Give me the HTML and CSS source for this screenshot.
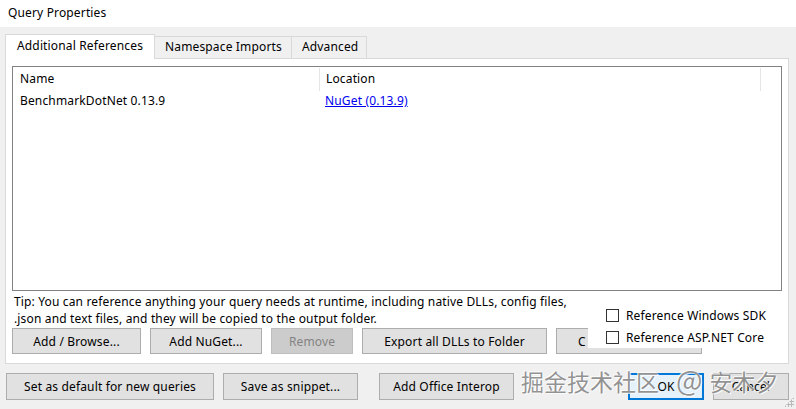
FILE: index.html
```html
<!DOCTYPE html>
<html>
<head>
<meta charset="utf-8">
<link rel="stylesheet" href="styles.css">
</head>
<body>
<div class="window">
  <div class="titlebar">Query Properties</div>
  <div class="dialog">
    <div class="tabs">
      <div class="tab active">Additional References</div>
      <div class="tab">Namespace Imports</div>
      <div class="tab">Advanced</div>
    </div>
    <div class="panel">
      <div class="list">
        <div class="list-head">
          <div class="col col-name">Name</div>
          <div class="col col-loc">Location</div>
          <div class="col col-rest"></div>
        </div>
        <div class="list-row">
          <div class="col col-name">BenchmarkDotNet 0.13.9</div>
          <div class="col col-loc"><a class="link">NuGet (0.13.9)</a></div>
        </div>
      </div>
      <div class="tip">Tip: You can reference anything your query needs at runtime, including native DLLs, config files,<br>.json and text files, and they will be copied to the output folder.</div>
      <div class="btnrow">
        <button class="btn w-add">Add / Browse...</button>
        <button class="btn w-nuget">Add NuGet...</button>
        <button class="btn w-remove disabled">Remove</button>
        <button class="btn w-export">Export all DLLs to Folder</button>
        <button class="btn w-c">C</button>
      </div>
      <div class="checks">
        <label class="check"><span class="box"></span>Reference Windows SDK</label>
        <label class="check"><span class="box"></span>Reference ASP.NET Core</label>
      </div>
    </div>
    <div class="bottomrow">
      <button class="btn w-default">Set as default for new queries</button>
      <button class="btn w-snippet">Save as snippet...</button>
      <button class="btn w-office">Add Office Interop</button>
      <div class="spacer"></div>
      <button class="btn w-ok focused">OK</button>
      <button class="btn w-cancel">Cancel</button>
    </div>
  </div>
  <div class="watermark">掘金技术社区<span class="at">@</span>安木夕</div>
  <div class="grip"></div>
</div>
</body>
</html>
```

FILE: styles.css
```css
* { box-sizing: border-box; }
html, body { margin: 0; padding: 0; }
body {
  width: 796px;
  height: 409px;
  overflow: hidden;
  background: #f0f0f0;
  font-family: "Noto Sans", "Noto Sans CJK SC", sans-serif;
  font-size: 12px;
  letter-spacing: 0.15px;
  color: #000;
}
.window {
  position: relative;
  width: 796px;
  height: 409px;
}
.titlebar {
  height: 27px;
  background: #fff;
  padding-left: 8px;
  line-height: 25px;
  font-size: 12px;
}
.dialog {
  padding: 6px 7px 0 5px;
}
.tabs {
  display: flex;
  align-items: flex-end;
  height: 25px;
}
.tab {
  height: 22px;
  line-height: 20px;
  padding: 0 8px 0 10px;
  border: 1px solid #d9d9d9;
  border-bottom: none;
  border-left: none;
  background: #f0f0f0;
  white-space: nowrap;
}
.tab.active {
  height: 25px;
  line-height: 22px;
  border-left: 1px solid #d9d9d9;
  background: #fff;
  width: 150px;
  padding-left: 11px;
  position: relative;
  z-index: 1;
  margin-bottom: -1px;
}
.tab:nth-child(2) { width: 137px; }
.tab:nth-child(3) { width: 75px; }
.panel {
  position: relative;
  background: #fff;
  border: 1px solid #d9d9d9;
  height: 306px;
  padding: 7px 6px 0 6px;
}
.list {
  height: 225px;
  border: 1px solid #828282;
}
.list-head, .list-row {
  display: flex;
}
.list-head {
  height: 24px;
  padding-top: 1px;
}
.list-head .col {
  line-height: 22px;
}
.col-name {
  width: 306px;
  padding-left: 7px;
}
.col-loc {
  width: 441px;
  padding-left: 6px;
}
.list-head .col-loc {
  border-left: 1px solid #e5e5e5;
}
.list-head .col-rest {
  border-left: 1px solid #e5e5e5;
  flex: 1;
}
.list-row {
  height: 22px;
  line-height: 20px;
}
.link {
  color: #0000ee;
  text-decoration: underline;
}
.tip {
  padding: 2px 0 0 2px;
  line-height: 17px;
  height: 37px;
}
.btnrow {
  display: flex;
  gap: 9px;
}
.btn {
  font-family: inherit;
  font-size: 12px;
  letter-spacing: 0.15px;
  color: #000;
  height: 26px;
  background: #e1e1e1;
  border: 1px solid #adadad;
  padding: 0;
  margin: 0;
  text-align: center;
}
.btn.disabled {
  background: #cccccc;
  border-color: #bfbfbf;
  color: #838383;
}
.w-add { width: 129px; }
.w-nuget { width: 112px; }
.w-remove { width: 82px; }
.w-export { width: 185px; }
.w-c { width: 146px; text-align: left; padding-left: 21px; }
.checks {
  position: absolute;
  left: 582px;
  top: 245px;
  display: flex;
  flex-direction: column;
}
.check {
  display: flex;
  align-items: center;
  height: 23px;
  padding-left: 18px;
  font-size: 12px;
  white-space: nowrap;
}
.check:nth-child(2) {
  background: #fff;
  width: 115px;
  height: 21px;
}
.box {
  width: 13px;
  height: 13px;
  border: 1px solid #333;
  background: #fff;
  margin-right: 7px;
  flex: none;
}
.bottomrow {
  display: flex;
  gap: 9px;
  margin-top: 9px;
  margin-left: 1px;
}
.bottomrow .btn { height: 27px; }
.w-default { width: 208px; }
.w-snippet { width: 135px; }
.w-office { width: 135px; margin-left: 12px; }
.spacer { flex: 1; }
.w-ok { width: 76px; }
.w-cancel { width: 76px; }
.btn.focused {
  border: 2px solid #0078d7;
  background: #e5f1fb;
}
.watermark {
  position: absolute;
  left: 521px;
  top: 362px;
  font-family: "Noto Sans CJK SC", sans-serif;
  font-size: 23px;
  line-height: 34px;
  letter-spacing: 0;
  color: rgba(110, 110, 110, 0.75);
  white-space: nowrap;
  text-shadow: 0 0 1px #fff, 1px 1px 0 rgba(255,255,255,0.8), -1px -1px 0 rgba(255,255,255,0.8);
}
.watermark .at {
  font-size: 28px;
  margin: 0 7px 0 17px;
}
.grip {
  position: absolute;
  right: 2px;
  bottom: 2px;
  width: 10px;
  height: 10px;
  background-image: radial-gradient(circle, #b8b8b8 1px, transparent 1.2px);
  background-size: 3px 3px;
  clip-path: polygon(100% 0, 100% 100%, 0 100%);
}
```
